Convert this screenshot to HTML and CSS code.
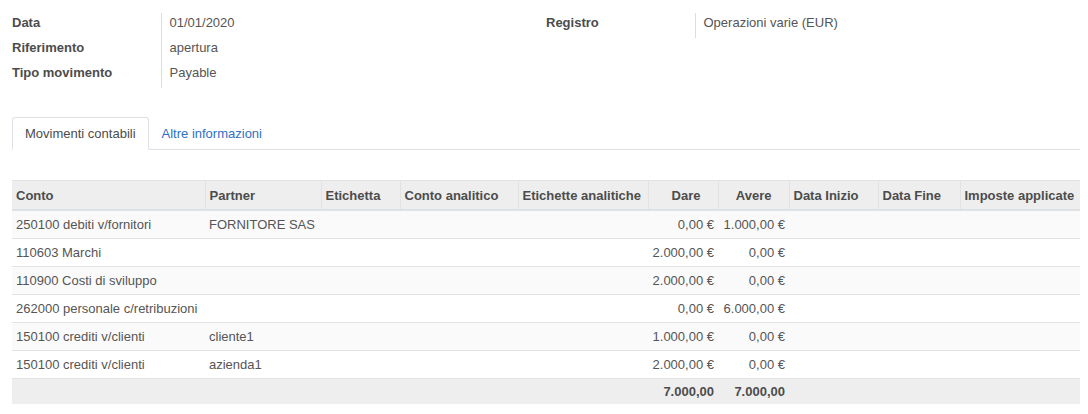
FILE: index.html
```html
<!DOCTYPE html>
<html lang="it">

<head>
  <meta charset="UTF-8">
  <meta name="viewport" content="width=device-width, initial-scale=1.0">
  <title>Movimento contabile</title>
  <link rel="stylesheet" href="styles.css">
</head>

<body>
  <div class="sheet">
    <div class="groups">
      <table class="group">
        <tr>
          <td class="label">Data</td>
          <td class="value">01/01/2020</td>
        </tr>
        <tr>
          <td class="label">Riferimento</td>
          <td class="value">apertura</td>
        </tr>
        <tr>
          <td class="label">Tipo movimento</td>
          <td class="value">Payable</td>
        </tr>
      </table>
      <table class="group">
        <tr>
          <td class="label">Registro</td>
          <td class="value">Operazioni varie (EUR)</td>
        </tr>
      </table>
    </div>

    <ul class="tabs">
      <li class="tab active">Movimenti contabili</li>
      <li class="tab"><a href="#">Altre informazioni</a></li>
    </ul>

    <table class="lines">
      <colgroup>
        <col style="width: 193px">
        <col style="width: 116px">
        <col style="width: 79px">
        <col style="width: 118px">
        <col style="width: 130px">
        <col style="width: 70px">
        <col style="width: 71px">
        <col style="width: 89px">
        <col style="width: 82px">
        <col style="width: 120px">
      </colgroup>
      <thead>
        <tr>
          <th>Conto</th>
          <th>Partner</th>
          <th>Etichetta</th>
          <th>Conto analitico</th>
          <th>Etichette analitiche</th>
          <th class="num">Dare</th>
          <th class="num">Avere</th>
          <th>Data Inizio</th>
          <th>Data Fine</th>
          <th>Imposte applicate</th>
        </tr>
      </thead>
      <tbody>
        <tr>
          <td>250100 debiti v/fornitori</td>
          <td>FORNITORE SAS</td>
          <td></td><td></td><td></td>
          <td class="num">0,00 €</td>
          <td class="num">1.000,00 €</td>
          <td></td><td></td><td></td>
        </tr>
        <tr>
          <td>110603 Marchi</td>
          <td></td><td></td><td></td><td></td>
          <td class="num">2.000,00 €</td>
          <td class="num">0,00 €</td>
          <td></td><td></td><td></td>
        </tr>
        <tr>
          <td>110900 Costi di sviluppo</td>
          <td></td><td></td><td></td><td></td>
          <td class="num">2.000,00 €</td>
          <td class="num">0,00 €</td>
          <td></td><td></td><td></td>
        </tr>
        <tr>
          <td>262000 personale c/retribuzioni</td>
          <td></td><td></td><td></td><td></td>
          <td class="num">0,00 €</td>
          <td class="num">6.000,00 €</td>
          <td></td><td></td><td></td>
        </tr>
        <tr>
          <td>150100 crediti v/clienti</td>
          <td>cliente1</td>
          <td></td><td></td><td></td>
          <td class="num">1.000,00 €</td>
          <td class="num">0,00 €</td>
          <td></td><td></td><td></td>
        </tr>
        <tr>
          <td>150100 crediti v/clienti</td>
          <td>azienda1</td>
          <td></td><td></td><td></td>
          <td class="num">2.000,00 €</td>
          <td class="num">0,00 €</td>
          <td></td><td></td><td></td>
        </tr>
      </tbody>
      <tfoot>
        <tr>
          <td></td><td></td><td></td><td></td><td></td>
          <td class="num">7.000,00</td>
          <td class="num">7.000,00</td>
          <td></td><td></td><td></td>
        </tr>
      </tfoot>
    </table>
  </div>
</body>

</html>
```

FILE: styles.css
```css
body {
  margin: 0;
  background-color: white;
  font-family: "Liberation Sans", Arial, sans-serif;
  font-size: 13px;
  color: #555555;
}

.sheet {
  padding: 13px 8px 0 12px;
}

.groups {
  display: flex;
}

.group {
  width: 50%;
  border-collapse: collapse;
  align-self: flex-start;
}

.group td {
  height: 25px;
  padding: 2px 0 0 0;
  line-height: 15px;
  vertical-align: top;
  box-sizing: border-box;
}

.label {
  width: 149px;
  border-right: 1px solid #dddddd;
  font-weight: bold;
  color: #4c4c4c;
}

.group .value {
  padding-left: 8px;
}

.tabs {
  display: flex;
  list-style: none;
  margin: 29px 0 30px 0;
  padding: 0;
  border-bottom: 1px solid #dee2e6;
}

.tab {
  height: 31px;
  padding: 0 12px;
  margin-bottom: -1px;
  line-height: 31px;
  border: 1px solid transparent;
  border-radius: 3px 3px 0 0;
}

.tab.active {
  background-color: white;
  color: #4c4c4c;
  border-color: #dee2e6 #dee2e6 white;
}

.tab a {
  color: #2f6fc4;
  text-decoration: none;
}

.lines {
  width: 1068px;
  table-layout: fixed;
  border-collapse: collapse;
}

.lines th,
.lines td {
  padding: 0 4px;
  white-space: nowrap;
  overflow: hidden;
  text-align: left;
}

.lines th {
  height: 28px;
  background-color: #eeeeee;
  border-top: 1px solid #e2e2e2;
  border-left: 1px solid #e2e2e2;
  border-bottom: 2px solid #dee2e6;
  font-weight: bold;
  color: #4c4c4c;
}

.lines th:first-child {
  border-left: none;
}

.lines td {
  height: 27px;
  border-top: 1px solid #e3e3e3;
}

.lines tbody tr:nth-child(odd) {
  background-color: #fafafa;
}

.lines .num {
  text-align: right;
}

.lines th.num {
  padding-right: 17px;
}

.lines tfoot td {
  height: 25px;
  background-color: #eeeeee;
  font-weight: bold;
  color: #4c4c4c;
}
```
